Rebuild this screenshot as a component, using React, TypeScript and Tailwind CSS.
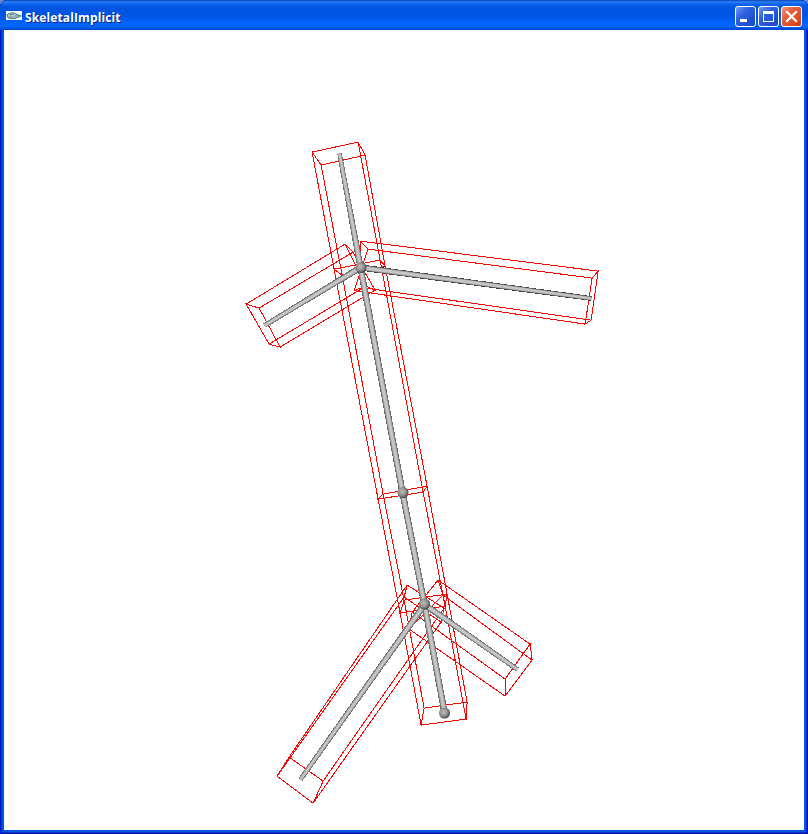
import React from "react";

type P = [number, number];
type Box = [P, P, P, P, P, P, P, P];

// Each box: four corners of one end face, then the matching corners of the other.
const boxes: Box[] = [
  [[312, 152], [358, 142], [365, 155], [321, 165], [334, 269], [380, 260], [385, 266], [342, 275]],
  [[334, 269], [380, 260], [385, 266], [342, 275], [378, 499], [423, 492], [427, 486], [383, 494]],
  [[378, 499], [423, 492], [427, 486], [383, 494], [400, 613], [445, 606], [447, 594], [404, 600]],
  [[400, 613], [445, 606], [447, 594], [404, 600], [421, 725], [466, 719], [467, 702], [424, 708]],
  [[246, 304], [259, 308], [280, 347], [269, 344], [345, 244], [353, 252], [375, 290], [366, 286]],
  [[598, 271], [592, 278], [585, 324], [591, 320], [360, 241], [368, 249], [354, 290.500], [362, 287.500]],
  [[277, 776], [289, 757], [323, 781], [313, 803], [404, 597], [407, 585], [444, 608], [441, 622]],
  [[530, 644], [532, 660], [505, 696], [505, 679], [438, 580], [443, 595], [409, 629], [412, 612]],
];

const bones: [P, P][] = [
  [[339, 153], [360, 267]],
  [[360, 267], [402, 492]],
  [[402, 492], [424, 604]],
  [[424, 604], [444, 712]],
  [[360, 267], [264, 325]],
  [[360, 267], [591, 298]],
  [[424, 604], [300, 779]],
  [[424, 604], [517, 669]],
];

const joints: P[] = [[361, 267.5], [403, 492.5], [424.5, 604], [444.5, 713]];

function boxPath(b: Box) {
  const at = (p: P) => `${p[0] + 0.1} ${p[1] + 0.1}`;
  const face = (i: number) =>
    `M${at(b[i])}L${at(b[i + 1])}L${at(b[i + 2])}L${at(b[i + 3])}Z`;
  const sides = [0, 1, 2, 3].map((i) => `M${at(b[i])}L${at(b[i + 4])}`).join("");
  return face(0) + face(4) + sides;
}

function tube([a, b]: [P, P], near: number, far: number) {
  const dx = b[0] - a[0];
  const dy = b[1] - a[1];
  const n = Math.hypot(dx, dy);
  const q = (p: P, w: number) =>
    `${p[0] + 0.5 - (dy / n) * w},${p[1] + 0.5 + (dx / n) * w}`;
  return [q(a, near), q(b, far), q(b, -far), q(a, -near)].join(" ");
}

function Skeleton() {
  return (
    <svg width="800" height="800" viewBox="4 30 800 800" className="block">
      <defs>
        <radialGradient id="joint" cx="0.42" cy="0.42" r="0.6">
          <stop offset="0" stopColor="#bcbcbc" />
          <stop offset="0.5" stopColor="#989898" />
          <stop offset="0.8" stopColor="#6c6c6c" />
          <stop offset="1" stopColor="#383838" />
        </radialGradient>
      </defs>
      <g fill="none" stroke="#f00" strokeWidth="1" shapeRendering="crispEdges">
        {boxes.map((b, i) => <path key={i} d={boxPath(b)} />)}
      </g>
      {bones.map((b, i) => (
        <g key={i}>
          <polygon shapeRendering="crispEdges" points={tube(b, i === 0 ? 2.3 : 3.2, i > 3 ? 2.4 : 3.2)} fill={i === 5 ? "#3a3a3a" : "#686868"} />
          <polygon points={tube(b, i === 0 ? 1.8 : 2.4, i > 3 ? 1.7 : 2.4)} fill="#9c9c9c" />
          <polygon points={tube(b, i === 0 ? 1 : 1.5, i > 3 ? 1.1 : 1.5)} fill="#c6c6c6" />
        </g>
      ))}
      {joints.map(([x, y], i) => (
        <circle key={i} cx={x} cy={y} r="5.5" fill="url(#joint)" />
      ))}
    </svg>
  );
}

const buttonBase =
  "flex h-[21px] w-[21px] items-center justify-center rounded-[3px] border border-white";

function TitleBar() {
  return (
    <div className="flex h-[30px] items-center rounded-t-[7px] bg-[linear-gradient(180deg,#0843b8_0,#2b83f8_2px,#0f62ea_4px,#0055e3_8px,#0054e2_15px,#0060f5_21px,#0368ff_26px,#0057e2_28px,#0042c8_30px)] pl-[6px] pr-[6px]">
      <svg width="16" height="10" viewBox="0 0 16 10" className="mt-[1px] shrink-0">
        <rect width="16" height="9" fill="#fff" />
        <path d="M1 4.5C2 1.5 8 1 11 3.5L15 5 11 6.5C8 8.5 2 8 1 4.500Z" fill="#c9d6d6" stroke="#3f8a8e" strokeWidth="1.1" />
        <path d="M8 3.500H4.500V6H8M8 5h5" fill="none" stroke="#6a7f84" strokeWidth="0.9" />
      </svg>
      <h1 className="ml-[3px] mt-[5px] flex-1 whitespace-nowrap font-['Open_Sans',sans-serif] text-[12px] font-bold leading-[18px] tracking-[0.12px] text-white [text-shadow:1px_1px_0_#0a1f8f]">
        SkeletalImplicit
      </h1>
      <div className="mt-[3px] flex gap-[2px]">
        <button aria-label="Minimize" className={`${buttonBase} bg-[linear-gradient(135deg,#6f9bf5_0%,#3063de_35%,#1f4fd4_75%,#164bc4_100%)]`}>
          <svg width="19" height="19"><rect x="4" y="12" width="7" height="3" fill="#fff" /></svg>
        </button>
        <button aria-label="Maximize" className={`${buttonBase} bg-[linear-gradient(135deg,#6f9bf5_0%,#3063de_35%,#1f4fd4_75%,#164bc4_100%)]`}>
          <svg width="19" height="19"><path d="M4 4h11v11H4zM5 7v7h9V7z" fill="#fff" fillRule="evenodd" /></svg>
        </button>
        <button aria-label="Close" className={`${buttonBase} bg-[linear-gradient(135deg,#ef9a83_0%,#e2603c_35%,#dc4b20_75%,#c33c12_100%)]`}>
          <svg width="19" height="19"><path d="M5 5l9 9M14 5l-9 9" stroke="#fff" strokeWidth="2.2" strokeLinecap="square" /></svg>
        </button>
      </div>
    </div>
  );
}

export default function App() {
  return (
    <div className="h-[834px] w-[808px] overflow-hidden bg-[#7189cf]">
      <div className="flex h-full flex-col overflow-hidden rounded-t-[7px] bg-[#0019cf] shadow-[inset_1px_0_#0019cf,inset_-1px_0_#00138c,inset_0_-1px_#00138c]">
        <TitleBar />
        <div className="mx-px mb-px flex flex-1 border-x border-b border-[#0831d9]">
          <main className="flex-1 border-x-2 border-b-2 border-[#0855dd] bg-white">
            <Skeleton />
          </main>
        </div>
      </div>
    </div>
  );
}
